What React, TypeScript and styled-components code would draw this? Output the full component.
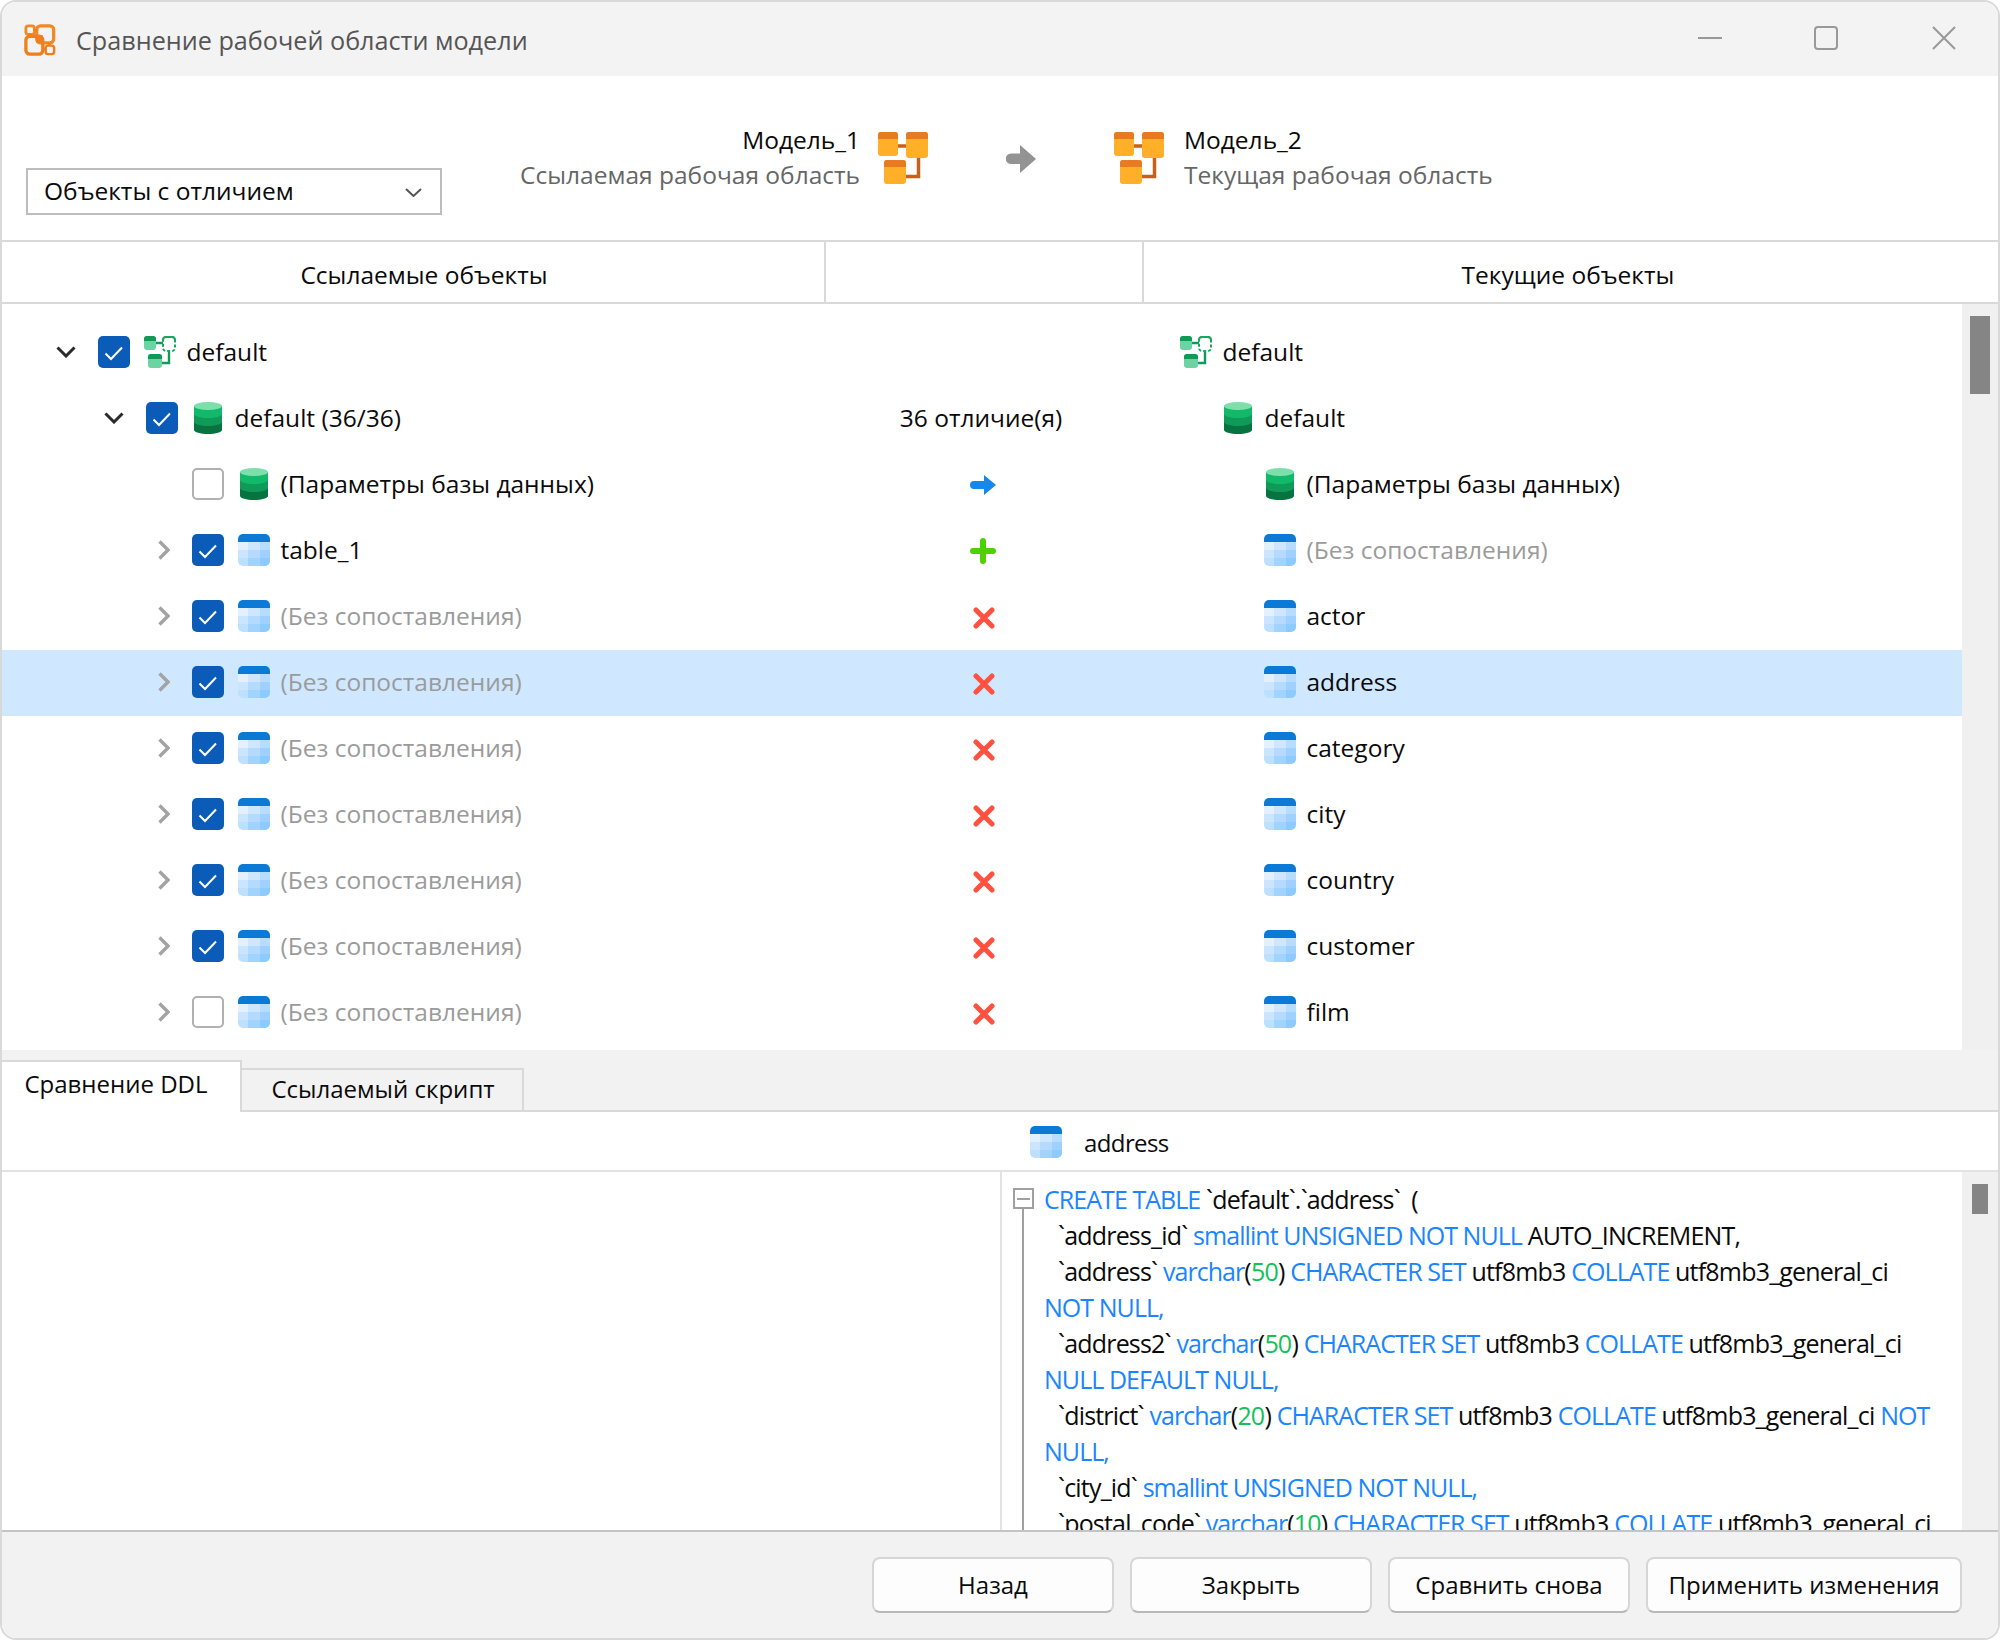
import React from "react";
import styled, { createGlobalStyle } from "styled-components";

const GlobalStyle = createGlobalStyle`
  html, body { margin: 0; padding: 0; background: #fff; }
  * { box-sizing: border-box; }
  body { font-family: "Open Sans", "Noto Sans", sans-serif; font-size: 24.5px; color: #0a0a0a; }
`;

const Win = styled.div`
  width: 2000px;
  height: 1640px;
  display: flex;
  flex-direction: column;
  border: 2px solid #d9d9d9;
  border-radius: 16px;
  overflow: hidden;
  background: #fff;
`;

const TitleBar = styled.div`
  flex: none;
  height: 74px;
  display: flex;
  align-items: center;
  background: #f3f3f3;
  padding: 2px 0 0 22px;
`;

const Title = styled.div`
  margin-left: 20px;
  font-size: 25.2px;
  font-weight: 500;
  color: #555;
`;

const WinButtons = styled.div`
  margin-left: auto;
  display: flex;
  align-items: center;
  gap: 92px;
  padding: 0 42px 4px 0;
`;

const Head = styled.div`
  flex: none;
  height: 166px;
  display: flex;
  align-items: flex-start;
  padding: 56px 0 0 24px;
  border-bottom: 2px solid #d9d9d9;
`;

const Dropdown = styled.div`
  width: 416px;
  height: 47px;
  margin-top: 36px;
  display: flex;
  align-items: center;
  justify-content: space-between;
  padding: 0 18px 2px 16px;
  border: 2px solid #bdbdbd;
`;

const ModelSide = styled.div<{ $first?: boolean }>`
  display: flex;
  gap: ${(p) => (p.$first ? 18 : 20)}px;
  ${(p) => (p.$first ? "width: 486px; justify-content: flex-end;" : "")}
`;

const ModelText = styled.div<{ $right?: boolean }>`
  display: flex;
  flex-direction: column;
  align-items: ${(p) => (p.$right ? "flex-end" : "flex-start")};
`;

const ModelName = styled.div`
  line-height: 36px;
  margin-top: -10px;
`;

const ModelHint = styled.div`
  line-height: 36px;
  margin-top: -1px;
  color: #666;
`;

const ArrowBox = styled.div`
  margin: 13px 78px 0;
  height: 28px;
`;

const ColHeader = styled.div`
  flex: none;
  height: 62px;
  display: grid;
  grid-template-columns: 822px 318px 1fr;
  border-bottom: 2px solid #d9d9d9;
`;

const ColCell = styled.div<{ $left?: number; $right?: number }>`
  display: flex;
  align-items: center;
  justify-content: center;
  padding: 5px ${(p) => p.$right || 0}px 0 ${(p) => p.$left || 0}px;
  & + & { border-left: 2px solid #d9d9d9; }
`;

const TreeArea = styled.div`
  flex: none;
  height: 746px;
  display: flex;
`;

const TreeList = styled.div`
  flex: 1;
  padding-top: 16px;
`;

const ScrollTrack = styled.div`
  flex: none;
  width: 36px;
  background: #f0f0f0;
`;

const ScrollThumb = styled.div<{ $top: number; $h: number; $w: number }>`
  width: ${(p) => p.$w}px;
  height: ${(p) => p.$h}px;
  margin: ${(p) => p.$top}px 0 0 ${(p) => (36 - p.$w) / 2}px;
  background: #858585;
`;

const Row = styled.div<{ $selected?: boolean }>`
  height: 66px;
  padding-bottom: 2px;
  display: grid;
  grid-template-columns: 823px 318px 1fr;
  align-items: center;
  background: ${(p) => (p.$selected ? "#cfe8ff" : "transparent")};
`;

const LeftCell = styled.div<{ $pad: number }>`
  display: flex;
  align-items: center;
  padding-left: ${(p) => p.$pad}px;
`;

const ExpandSlot = styled.div`
  flex: none;
  width: 48px;
  display: flex;
  justify-content: flex-end;
  padding-right: 22px;
`;

const CheckBox = styled.div<{ $on?: boolean }>`
  flex: none;
  width: 32px;
  height: 32px;
  margin-right: 14px;
  border-radius: 5px;
  background: ${(p) => (p.$on ? "#0a5cb8" : "#fff")};
  border: ${(p) => (p.$on ? "none" : "2px solid #b0b0b0")};
`;

const IconSlot = styled.div`
  flex: none;
  width: 32px;
  height: 32px;
  margin-right: 10.5px;
  display: flex;
  justify-content: center;
`;

const Label = styled.div<{ $muted?: boolean }>`
  padding-bottom: 2px;
  white-space: nowrap;
  color: ${(p) => (p.$muted ? "#9b9b9b" : "#0a0a0a")};
`;

const StatusCell = styled.div`
  display: flex;
  align-items: center;
  justify-content: center;
`;

const StatusText = styled.div`
  padding: 0 6px 2px 0;
`;

const StatusGlyph = styled.div<{ $drop: number; $back?: number }>`
  display: flex;
  padding: ${(p) => p.$drop}px ${(p) => p.$back || 0}px 0 0;
`;

const RightCell = styled.div<{ $pad: number }>`
  display: flex;
  align-items: center;
  padding-left: ${(p) => p.$pad}px;
`;

const TabStrip = styled.div`
  flex: none;
  height: 62px;
  display: flex;
  align-items: flex-end;
  background: #f2f2f2;
  border-bottom: 2px solid #d9d9d9;
`;

const Tab = styled.div<{ $active?: boolean }>`
  display: flex;
  align-items: center;
  justify-content: center;
  font-size: 24px;
  ${(p) =>
    p.$active
      ? `width: 240px; height: 52px; margin-bottom: -2px; padding: 0 10px 8px 0; background: #fff;
         border-top: 2px solid #d9d9d9; border-right: 2px solid #d9d9d9;`
      : `width: 282px; height: 42px; padding: 0 0 4px 2px; border: 2px solid #d9d9d9; border-left: none; border-bottom: none;`}
`;

const AddressBar = styled.div`
  flex: none;
  height: 60px;
  display: flex;
  align-items: center;
  padding: 2px 0 0 1028px;
  gap: 22px;
  font-size: 24px;
  letter-spacing: -0.6px;
  border-bottom: 2px solid #e2e2e2;
`;

const DiffArea = styled.div`
  flex: 1;
  min-height: 0;
  display: flex;
  overflow: hidden;
`;

const DiffLeft = styled.div`
  flex: none;
  width: 1000px;
  border-right: 2px solid #e2e2e2;
`;

const FoldGutter = styled.div`
  flex: none;
  width: 42px;
  display: flex;
  flex-direction: column;
  align-items: center;
  padding-top: 16px;
`;

const FoldBox = styled.div`
  flex: none;
  width: 21px;
  height: 21px;
  display: flex;
  align-items: center;
  justify-content: center;
  border: 2px solid #a0a0a0;
  &::after {
    content: "";
    width: 13px;
    height: 2px;
    background: #a0a0a0;
  }
`;

const FoldLine = styled.div`
  flex: 1;
  width: 2px;
  background: #a0a0a0;
`;

const CodeBody = styled.div`
  flex: 1;
  padding-top: 9px;
  overflow: hidden;
`;

const CodeLine = styled.div<{ $indent?: boolean }>`
  height: 36px;
  line-height: 36px;
  font-size: 25px;
  letter-spacing: -0.8px;
  white-space: pre;
  padding-left: ${(p) => (p.$indent ? 14 : 0)}px;
`;

const Kw = styled.span`
  color: #1a85ff;
  letter-spacing: -0.95px;
`;

const Num = styled.span`
  color: #12c15a;
`;

const Footer = styled.div`
  flex: none;
  height: 108px;
  display: flex;
  justify-content: flex-end;
  gap: 16px;
  padding: 25px 36px 0 0;
  background: #f2f2f2;
  border-top: 2px solid #c4c4c4;
`;

const FootButton = styled.div<{ $w: number }>`
  width: ${(p) => p.$w}px;
  height: 56px;
  display: flex;
  align-items: center;
  justify-content: center;
  padding-bottom: 2px;
  font-size: 24px;
  background: #fdfdfd;
  border: 2px solid #d6d6d6;
  border-bottom-color: #b8b8b8;
  border-radius: 8px;
`;

const BlockSvg = styled.svg`
  display: block;
`;

const RoundedSvg = styled.svg`
  display: block;
  border-radius: 5px;
`;

const CloseSvg = styled.svg`
  margin-left: 2px;
`;

const DropChevronSvg = styled.svg`
  margin-top: 4px;
`;

const Logo = () => (
  <svg width="32" height="32" viewBox="0 0 34 34" fill="none">
    <rect x="2" y="2" width="9" height="9" rx="2.5" stroke="#f08a24" strokeWidth="3" />
    <rect x="13.5" y="2" width="18" height="18" rx="4" stroke="#f08a24" strokeWidth="3.5" />
    <rect x="2" y="13" width="18" height="19" rx="4" stroke="#ee7f1c" strokeWidth="3.5" />
    <rect x="23" y="23" width="9" height="9" rx="2.5" stroke="#ee7f1c" strokeWidth="2.6" />
    <rect x="13" y="12" width="7" height="8" fill="#ee7f1c" />
    <path d="M20 27h3M27 20v3M11 6.5h3M6.5 11v2" stroke="#ee7f1c" strokeWidth="2.4" />
  </svg>
);

const WinMin = () => (
  <svg width="24" height="24" viewBox="0 0 24 24"><path d="M0 12h24" stroke="#999" strokeWidth="2" /></svg>
);
const WinMax = () => (
  <svg width="24" height="24" viewBox="0 0 24 24" fill="none"><rect x="1" y="1" width="22" height="22" rx="3" stroke="#999" strokeWidth="2" /></svg>
);
const WinClose = () => (
  <CloseSvg width="24" height="24" viewBox="0 0 24 24"><path d="M1 1l22 22M23 1L1 23" stroke="#999" strokeWidth="2" /></CloseSvg>
);

const ChevronSmall = () => (
  <DropChevronSvg width="17" height="9" viewBox="0 0 17 9" fill="none"><path d="M1 1l7.500 7L16 1" stroke="#555" strokeWidth="2" /></DropChevronSvg>
);

const ModelIcon = () => {
  const box = (x: number, y: number, w: number, h: number) => (
    <g>
      <rect x={x} y={y} width={w} height={h} rx="3" fill="#ffb028" />
      <path d={`M${x} ${y + 7}v-4a3 3 0 0 1 3-3h${w - 6}a3 3 0 0 1 3 3v4z`} fill="#e87a22" />
    </g>
  );
  return (
    <svg width="50" height="52" viewBox="0 0 50 52" fill="none">
      <path d="M20 14h8M40.500 26v18.500H28" stroke="#c8601c" strokeWidth="3.500" />
      {box(0, 0, 20, 24)}
      {box(28, 0, 22, 26)}
      {box(6, 28, 22, 24)}
    </svg>
  );
};

const GrayArrow = () => (
  <svg width="30" height="28" viewBox="0 0 30 28"><path d="M14 0l16 14-16 14v-9H5a5 5 0 0 1 0-10.500h9z" fill="#939393" /></svg>
);

const Check = () => (
  <svg width="32" height="32" viewBox="0 0 32 32" fill="none"><path d="M7.500 17.500l5.500 5.500L24 11.500" stroke="#fff" strokeWidth="2" /></svg>
);

const ChevronDown = () => (
  <BlockSvg width="20" height="12" viewBox="0 0 20 12" fill="none"><path d="M1.500 1.500L10 10l8.500-8.500" stroke="#2a2a2a" strokeWidth="3" /></BlockSvg>
);

const ChevronRight = () => (
  <BlockSvg width="12" height="20" viewBox="0 0 12 20" fill="none"><path d="M1.500 1.500L10 10l-8.500 8.500" stroke="#a3a3a3" strokeWidth="3.400" /></BlockSvg>
);

const SchemaIcon = () => (
  <svg width="32" height="32" viewBox="0 0 32 32" fill="none">
    <path d="M12 7h7M25 16v11H18" stroke="#0f9a58" strokeWidth="2.400" />
    <rect x="0" y="0" width="12" height="14" rx="3" fill="#6ed3a2" />
    <path d="M0 5V3a3 3 0 0 1 3-3h6a3 3 0 0 1 3 3v2z" fill="#0f9a58" />
    <rect x="4" y="18" width="14" height="14" rx="3" fill="#6ed3a2" />
    <path d="M4 23v-2a3 3 0 0 1 3-3h8a3 3 0 0 1 3 3v2z" fill="#0f9a58" />
    <rect x="19" y="1" width="12" height="14" rx="3" stroke="#12a860" strokeWidth="2" strokeDasharray="3 2" fill="#fff" />
    <path d="M19 4a3 3 0 0 1 3-3h6a3 3 0 0 1 3 3" stroke="#12a860" strokeWidth="2" />
  </svg>
);

const DbIcon = () => (
  <svg width="28" height="32" viewBox="0 0 28 32">
    <path d="M0 4v24c0 2.200 6.300 4 14 4s14-1.800 14-4V4z" fill="#067340" />
    <path d="M0 4v16c0 2.200 6.300 4 14 4s14-1.800 14-4V4z" fill="#0f9a58" />
    <path d="M0 4v8c0 2.200 6.300 4 14 4s14-1.800 14-4V4z" fill="#12b96b" />
    <ellipse cx="14" cy="4" rx="14" ry="4" fill="#7de0ab" />
  </svg>
);

const tableCells = [
  ["#e3f1ff", "#cfe6ff", "#b6dcff"],
  ["#cbe5ff", "#b4daff", "#9fd0ff"],
  ["#bee0ff", "#a1d3ff", "#8ccaff"],
];

const TableIcon = () => (
  <RoundedSvg width="32" height="32" viewBox="0 0 32 32">
    <rect width="32" height="8" fill="#0a7ad6" />
    {tableCells.map((cells, r) =>
      cells.map((c, i) => (
        <rect key={`${r}-${i}`} x={[0, 10, 22][i]} y={8 + r * 8} width={[10, 12, 10][i]} height="8" fill={c} />
      ))
    )}
  </RoundedSvg>
);

const StatusArrow = () => (
  <StatusGlyph $drop={2} $back={2}>
    <svg width="26" height="20" viewBox="0 0 26 20"><path d="M14 0l12 10-12 10v-6H4a4 4 0 0 1 0-8h10z" fill="#1688ea" /></svg>
  </StatusGlyph>
);
const StatusPlus = () => (
  <StatusGlyph $drop={2} $back={2}>
    <svg width="26" height="26" viewBox="0 0 26 26"><path d="M13 3v20M3 13h20" stroke="#4fd000" strokeWidth="6" strokeLinecap="round" /></svg>
  </StatusGlyph>
);
const StatusCross = () => (
  <StatusGlyph $drop={4}>
    <svg width="22" height="22" viewBox="0 0 22 22"><path d="M3 3l16 16M19 3L3 19" stroke="#ff5040" strokeWidth="5" strokeLinecap="round" /></svg>
  </StatusGlyph>
);

type RowData = {
  pad: number;
  expand?: "down" | "right";
  checked: boolean;
  icon: "schema" | "db" | "table";
  left: string;
  leftMuted?: boolean;
  status?: React.ReactNode;
  rightPad: number;
  right: string;
  rightMuted?: boolean;
  selected?: boolean;
};

const drop = (right: string, checked = true, selected = false): RowData => ({
  pad: 142,
  expand: "right",
  checked,
  icon: "table",
  left: "(Без сопоставления)",
  leftMuted: true,
  status: <StatusCross />,
  rightPad: 121,
  right,
  selected,
});

const rows: RowData[] = [
  { pad: 48, expand: "down", checked: true, icon: "schema", left: "default", rightPad: 37, right: "default" },
  { pad: 96, expand: "down", checked: true, icon: "db", left: "default (36/36)", status: <StatusText>36 отличие(я)</StatusText>, rightPad: 79, right: "default" },
  { pad: 142, checked: false, icon: "db", left: "(Параметры базы данных)", status: <StatusArrow />, rightPad: 121, right: "(Параметры базы данных)" },
  { pad: 142, expand: "right", checked: true, icon: "table", left: "table_1", status: <StatusPlus />, rightPad: 121, right: "(Без сопоставления)", rightMuted: true },
  drop("actor"),
  drop("address", true, true),
  drop("category"),
  drop("city"),
  drop("country"),
  drop("customer"),
  drop("film", false),
];

const iconFor = (k: RowData["icon"]) =>
  k === "schema" ? <SchemaIcon /> : k === "db" ? <DbIcon /> : <TableIcon />;

// k = keyword, n = number, plain string = normal text
type Part = string | { k: string } | { n: string };

const charset = (size: string, tail: Part[]): Part[] => [
  { k: "varchar" }, "(", { n: size }, ") ",
  { k: "CHARACTER SET" }, " utf8mb3 ",
  { k: "COLLATE" }, " utf8mb3_general_ci",
  ...tail,
];

const code: { indent?: boolean; parts: Part[] }[] = [
  { parts: [{ k: "CREATE TABLE" }, " `default`.`address`  ("] },
  { indent: true, parts: ["`address_id` ", { k: "smallint UNSIGNED NOT NULL" }, " AUTO_INCREMENT,"] },
  { indent: true, parts: ["`address` ", ...charset("50", [])] },
  { parts: [{ k: "NOT NULL," }] },
  { indent: true, parts: ["`address2` ", ...charset("50", [])] },
  { parts: [{ k: "NULL DEFAULT NULL," }] },
  { indent: true, parts: ["`district` ", ...charset("20", [" ", { k: "NOT" }])] },
  { parts: [{ k: "NULL," }] },
  { indent: true, parts: ["`city_id` ", { k: "smallint UNSIGNED NOT NULL," }] },
  { indent: true, parts: ["`postal_code` ", ...charset("10", [])] },
];

const renderPart = (p: Part, i: number) => {
  if (typeof p === "string") return <span key={i}>{p}</span>;
  if ("k" in p) return <Kw key={i}>{p.k}</Kw>;
  return <Num key={i}>{p.n}</Num>;
};

const App = () => {
  return (
    <Win>
      <GlobalStyle />
      <TitleBar>
        <Logo />
        <Title>Сравнение рабочей области модели</Title>
        <WinButtons>
          <WinMin />
          <WinMax />
          <WinClose />
        </WinButtons>
      </TitleBar>

      <Head>
        <Dropdown>
          Объекты с отличием
          <ChevronSmall />
        </Dropdown>
        <ModelSide $first>
          <ModelText $right>
            <ModelName>Модель_1</ModelName>
            <ModelHint>Ссылаемая рабочая область</ModelHint>
          </ModelText>
          <ModelIcon />
        </ModelSide>
        <ArrowBox>
          <GrayArrow />
        </ArrowBox>
        <ModelSide>
          <ModelIcon />
          <ModelText>
            <ModelName>Модель_2</ModelName>
            <ModelHint>Текущая рабочая область</ModelHint>
          </ModelText>
        </ModelSide>
      </Head>

      <ColHeader>
        <ColCell $left={22}>Ссылаемые объекты</ColCell>
        <ColCell />
        <ColCell $right={6}>Текущие объекты</ColCell>
      </ColHeader>

      <TreeArea>
        <TreeList>
          {rows.map((r, i) => (
            <Row key={i} $selected={r.selected}>
              <LeftCell $pad={r.pad}>
                <ExpandSlot>
                  {r.expand === "down" && <ChevronDown />}
                  {r.expand === "right" && <ChevronRight />}
                </ExpandSlot>
                <CheckBox $on={r.checked}>{r.checked && <Check />}</CheckBox>
                <IconSlot>{iconFor(r.icon)}</IconSlot>
                <Label $muted={r.leftMuted}>{r.left}</Label>
              </LeftCell>
              <StatusCell>{r.status}</StatusCell>
              <RightCell $pad={r.rightPad}>
                <IconSlot>{iconFor(r.icon)}</IconSlot>
                <Label $muted={r.rightMuted}>{r.right}</Label>
              </RightCell>
            </Row>
          ))}
        </TreeList>
        <ScrollTrack>
          <ScrollThumb $top={12} $h={78} $w={20} />
        </ScrollTrack>
      </TreeArea>

      <TabStrip>
        <Tab $active>Сравнение DDL</Tab>
        <Tab>Ссылаемый скрипт</Tab>
      </TabStrip>

      <AddressBar>
        <TableIcon />
        address
      </AddressBar>

      <DiffArea>
        <DiffLeft />
        <FoldGutter>
          <FoldBox />
          <FoldLine />
        </FoldGutter>
        <CodeBody>
          {code.map((l, i) => (
            <CodeLine key={i} $indent={l.indent}>
              {l.parts.map(renderPart)}
            </CodeLine>
          ))}
        </CodeBody>
        <ScrollTrack>
          <ScrollThumb $top={12} $h={30} $w={16} />
        </ScrollTrack>
      </DiffArea>

      <Footer>
        <FootButton $w={242}>Назад</FootButton>
        <FootButton $w={242}>Закрыть</FootButton>
        <FootButton $w={242}>Сравнить снова</FootButton>
        <FootButton $w={316}>Применить изменения</FootButton>
      </Footer>
    </Win>
  );
};

export default App;
